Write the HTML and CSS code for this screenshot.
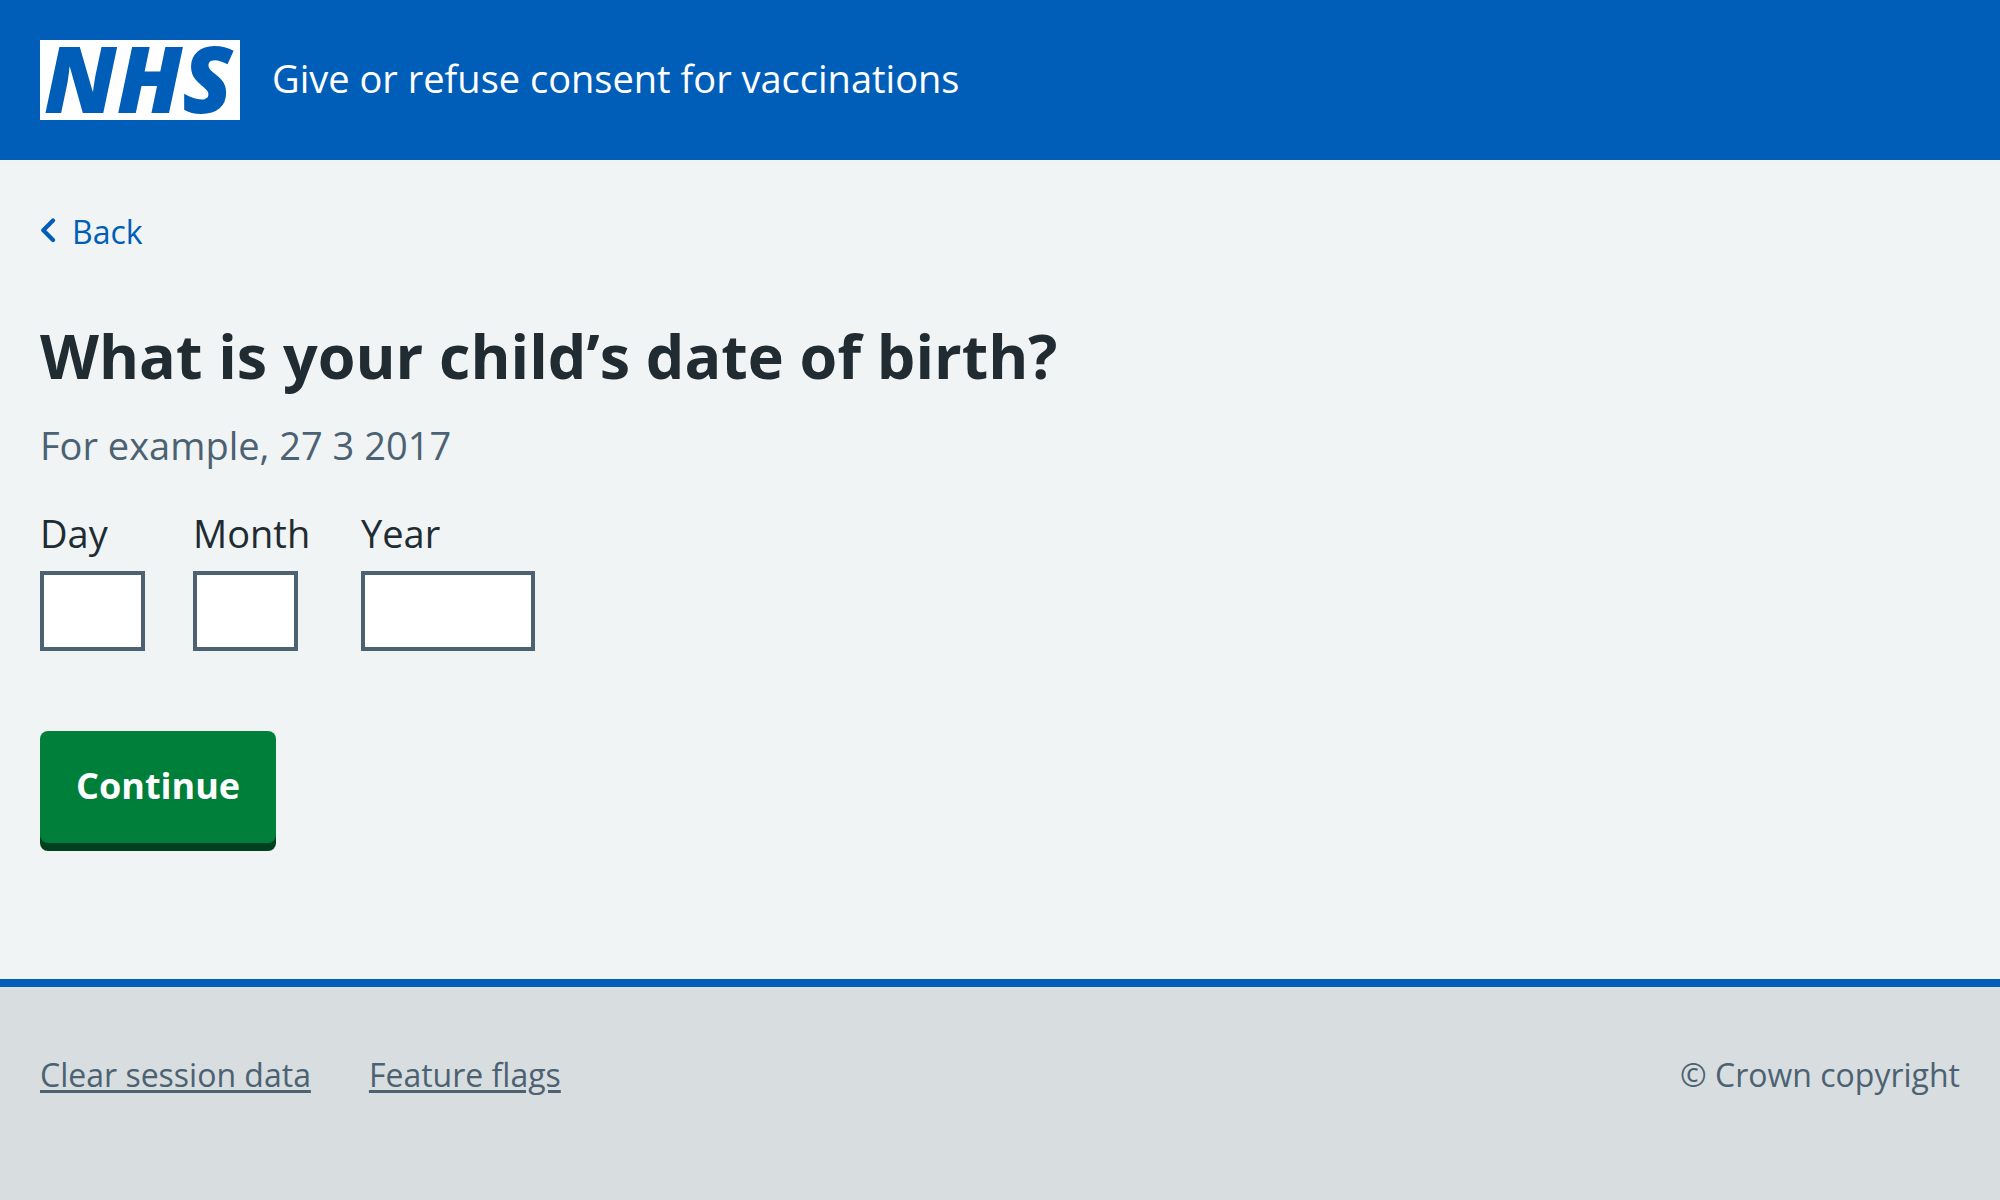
FILE: index.html
```html
<!DOCTYPE html>
<html lang="en">
<head>
  <meta charset="utf-8">
  <meta name="viewport" content="width=device-width, initial-scale=1">
  <title>What is your child’s date of birth? – Give or refuse consent for vaccinations</title>
  <link rel="stylesheet" href="styles.css">
</head>
<body>
  <header class="header">
    <svg class="header-logo" viewBox="0 0 200 80" role="img" aria-label="NHS">
      <rect width="200" height="80" fill="#ffffff"/>
      <text class="header-logo-text" x="4" y="73">NHS</text>
    </svg>
    <span class="header-service">Give or refuse consent for vaccinations</span>
  </header>

  <main class="main">
    <a class="back-link" href="#">
      <svg class="back-link-icon" viewBox="0 0 16 28" aria-hidden="true">
        <path d="M13 2.500 3.300 12.200 13 22" fill="none" stroke="currentColor" stroke-width="4.200" stroke-linecap="round" stroke-linejoin="round"/>
      </svg>
      Back
    </a>

    <form class="form" action="#" method="post">
      <fieldset class="fieldset" aria-describedby="dob-hint">
        <legend class="legend"><h1 class="heading">What is your child’s date of birth?</h1></legend>
        <div class="hint" id="dob-hint">For example, 27 3 2017</div>
        <div class="date">
          <div class="date-item">
            <label class="label" for="dob-day">Day</label>
            <input class="input" id="dob-day" name="day" type="text" inputmode="numeric">
          </div>
          <div class="date-item date-item-month">
            <label class="label" for="dob-month">Month</label>
            <input class="input" id="dob-month" name="month" type="text" inputmode="numeric">
          </div>
          <div class="date-item">
            <label class="label" for="dob-year">Year</label>
            <input class="input input-year" id="dob-year" name="year" type="text" inputmode="numeric">
          </div>
        </div>
      </fieldset>
      <button class="button" type="submit">Continue</button>
    </form>
  </main>

  <footer class="footer">
    <nav class="footer-links" aria-label="Footer">
      <a class="footer-link" href="#">Clear session data</a>
      <a class="footer-link" href="#">Feature flags</a>
    </nav>
    <span>© Crown copyright</span>
  </footer>
</body>
</html>
```
FILE: styles.css
```css
* {
  box-sizing: border-box;
}

body {
  display: flex;
  flex-direction: column;
  min-height: 100vh;
  margin: 0;
  background: #f0f4f5;
  color: #212b32;
  font-family: "Open Sans", "Noto Sans", sans-serif;
  font-size: 38px;
  line-height: 56px;
}

/* Header */

.header {
  display: flex;
  align-items: center;
  gap: 32px;
  padding: 40px;
  background: #005eb8;
  color: #ffffff;
}

.header-logo {
  flex: none;
  width: 200px;
  height: 80px;
  overflow: visible;
}

.header-logo-text {
  fill: #005eb8;
  font-size: 92px;
  font-style: italic;
  font-weight: 800;
}

.header-service {
  padding-bottom: 4px;
}

/* Page content */

.main {
  padding: 48px 40px 136px;
}

.back-link {
  display: flex;
  align-items: center;
  gap: 16px;
  width: fit-content;
  color: #005eb8;
  font-size: 32px;
  line-height: 47px;
  text-decoration: none;
}

.back-link-icon {
  width: 16px;
  height: 28px;
}

.form {
  margin-top: 64px;
}

.fieldset {
  min-width: 0;
  margin: 0;
  padding: 0;
  border: 0;
}

.legend {
  padding: 0;
}

.heading {
  margin: 0;
  font-size: 61px;
  font-weight: 700;
  line-height: 74px;
}

.hint {
  margin-top: 24px;
  color: #4c6272;
}

.date {
  display: flex;
  flex-wrap: wrap;
  gap: 48px;
  margin-top: 32px;
}

.date-item {
  display: flex;
  flex-direction: column;
  align-items: flex-start;
  gap: 10px;
}

.date-item-month {
  min-width: 120px;
}

.input {
  width: 105px;
  height: 80px;
  padding: 8px;
  border: 4px solid #4c6272;
  border-radius: 0;
  background: #ffffff;
  color: inherit;
  font: inherit;
}

.input-year {
  width: 174px;
}

.button {
  display: block;
  margin-top: 80px;
  padding: 27px 36px 29px;
  border: 0;
  border-radius: 8px;
  background: #007f3b;
  box-shadow: 0 8px 0 #00401e;
  color: #ffffff;
  font: inherit;
  font-size: 36px;
  font-weight: 700;
}

/* Footer */

.footer {
  display: flex;
  flex: 1;
  flex-wrap: wrap;
  align-items: flex-start;
  justify-content: space-between;
  padding: 64px 40px;
  border-top: 8px solid #005eb8;
  background: #d8dde0;
  color: #4c6272;
  font-size: 32px;
  line-height: 48px;
}

.footer-links {
  display: flex;
  flex-wrap: wrap;
  gap: 58px;
}

.footer-link {
  color: inherit;
  text-decoration-thickness: 3px;
  text-underline-offset: 3px;
}
```
